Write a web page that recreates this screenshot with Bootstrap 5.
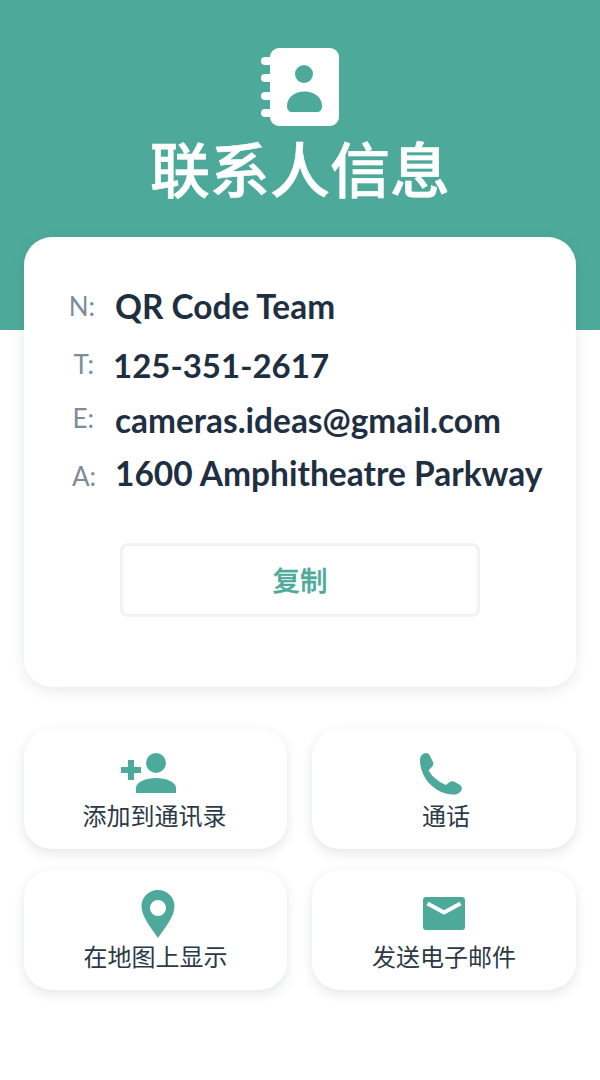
<!DOCTYPE html>
<html lang="zh-CN">

<head>
    <meta charset="UTF-8">
    <meta name="viewport" content="width=device-width, initial-scale=1.0">
    <title>联系人信息</title>
    <link href="https://cdn.jsdelivr.net/npm/bootstrap@5.3.2/dist/css/bootstrap.min.css" rel="stylesheet">

    <style>
        body {
            font-family: Lato, "Noto Sans CJK SC", sans-serif;
            background-color: #fff;
            color: #1f2f42;
        }

        .page-head {
            height: 330px;
            padding-top: 48px;
            background-color: #4daa9a;
        }

        .head-icon {
            display: block;
            width: 78px;
            height: 78px;
            margin: 0 auto;
        }

        .head-title {
            margin: 14px 0 0;
            font-size: 60px;
            line-height: 60px;
            font-weight: 500;
            -webkit-text-stroke: .6px #fff;
            color: #fff;
        }

        .info-card {
            margin: -93px 24px 0;
            padding: 49px 0 70px;
            border: 0;
            border-radius: 28px;
            box-shadow: 0 4px 14px rgba(30, 50, 70, .1);
        }

        .info-row {
            height: 40px;
            line-height: 40px;
        }

        .row-t { margin-top: 19px; }
        .row-e { margin-top: 15px; }
        .row-a { margin-top: 13px; }

        .info-label {
            width: 71px;
            flex: none;
            text-align: right;
            font-size: 26px;
            color: #7d8c9a;
        }

        .info-value {
            margin-left: 20px;
            font-size: 33.4px;
            font-weight: 700;
            white-space: nowrap;
        }

        .row-t .info-label { margin-top: -1px; width: 70px; }
        .row-t .info-value { margin-left: 19px; font-size: 33px; }
        .row-e .info-label { margin-top: -2px; width: 70px; }
        .row-e .info-value { margin-left: 21px; }
        .row-a .info-label { margin-top: 3px; width: 72px; }
        .row-a .info-value { margin-left: 19px; font-size: 33.5px; }

        .copy-btn {
            display: block;
            width: 360px;
            height: 74px;
            margin: 50px auto 0;
            padding-top: 8px;
            border: 3px solid #f1f2f2;
            border-radius: 8px;
            background-color: #fff;
            font-size: 27.500px;
            font-weight: 500;
            -webkit-text-stroke: .3px #4daa9a;
            color: #4daa9a;
        }

        .action-grid {
            display: grid;
            grid-template-columns: 263px 264px;
            column-gap: 25px;
            row-gap: 21px;
            margin: 42px 24px 0;
            padding-bottom: 40px;
        }

        .action-tile {
            height: 120px;
            padding-top: 20px;
            border: 0;
            border-radius: 28px;
            box-shadow: 0 4px 12px rgba(30, 50, 70, .12);
            font-size: 24px;
            line-height: 32px;
            color: #2c3a47;
        }

        .tile-icon {
            display: block;
            height: 48px;
            margin-bottom: 3px;
        }

        .icon-add { margin-left: -14px; }
        .icon-call { margin-left: -6px; }
        .icon-pin { margin-left: 4px; }
        .text-add { margin-left: -2px; }
        .text-call { margin-left: 4px; }
    </style>
</head>

<body>
    <!-- Cabecalho -->
    <header class="page-head text-center">
        <svg class="head-icon" viewBox="261 48 78 78">
            <rect x="270" y="48" width="69" height="78" rx="9" fill="#fff" />
            <rect x="261" y="57" width="14" height="8" rx="4" fill="#fff" />
            <rect x="261" y="74" width="14" height="8" rx="4" fill="#fff" />
            <rect x="261" y="92" width="14" height="8" rx="4" fill="#fff" />
            <rect x="261" y="109" width="14" height="8" rx="4" fill="#fff" />
            <circle cx="304" cy="74" r="9" fill="#4daa9a" />
            <path d="M287 106C287 97 295 91.500 304.500 91.500S322 97 322 106C322 110 320 112 317 112H292C289 112 287 110 287 106Z" fill="#4daa9a" />
        </svg>
        <h1 class="head-title">联系人信息</h1>
    </header>

    <main>
        <div class="card info-card">
            <div class="info-row d-flex row-n">
                <span class="info-label">N:</span>
                <span class="info-value">QR Code Team</span>
            </div>
            <div class="info-row d-flex row-t">
                <span class="info-label">T:</span>
                <span class="info-value">125-351-2617</span>
            </div>
            <div class="info-row d-flex row-e">
                <span class="info-label">E:</span>
                <span class="info-value">cameras.ideas@gmail.com</span>
            </div>
            <div class="info-row d-flex row-a">
                <span class="info-label">A:</span>
                <span class="info-value">1600 Amphitheatre Parkway</span>
            </div>
            <button type="button" class="btn copy-btn">复制</button>
        </div>

        <!-- Acoes -->
        <div class="action-grid">
            <div class="card action-tile align-items-center">
                <svg class="tile-icon icon-add" width="58" viewBox="120 748 58 48">
                    <circle cx="156" cy="762" r="10" fill="#4daa9a" />
                    <path d="M136 792V787C136 781 146 777 156 777S176 781 176 787V792Z" fill="#4daa9a" />
                    <path d="M121 769H141M131 759V779" stroke="#4daa9a" stroke-width="6" fill="none" />
                </svg>
                <span class="text-add">添加到通讯录</span>
            </div>
            <div class="card action-tile align-items-center">
                <svg class="tile-icon icon-call" width="44" viewBox="-1 -4 44 48">
                    <path d="M0 7C0 3 3 0 6 0C8 0 9 1 10 3L13 9C14 11 13 13 11 15L8.500 17C12 24 19 29 26 32L29 29.500C31 28 33 28 35 29L40 32C42 33.500 42.500 36 41 38C39 41 36 41.500 33 41.500C15 41 0 25 0 7Z" fill="#4daa9a" />
                </svg>
                <span class="text-call">通话</span>
            </div>
            <div class="card action-tile align-items-center">
                <svg class="tile-icon icon-pin" width="34" viewBox="140 889 34 48">
                    <path fill-rule="evenodd" d="M157 889C166 889 173.500 896 173.500 905C173.500 916 163 928 157 937C151 928 140.500 916 140.500 905C140.500 896 148 889 157 889ZM157 899A8 8 0 1 0 157 915A8 8 0 1 0 157 899Z" fill="#4daa9a" />
                </svg>
                <span>在地图上显示</span>
            </div>
            <div class="card action-tile align-items-center">
                <svg class="tile-icon" width="42" viewBox="0 -7 42 48">
                    <rect width="42" height="33" rx="3" fill="#4daa9a" />
                    <path d="M4.500 6.500L21 15.500L37.500 6.500" stroke="#fff" stroke-width="4" fill="none" />
                </svg>
                <span>发送电子邮件</span>
            </div>
        </div>
    </main>

    <script src="https://cdn.jsdelivr.net/npm/bootstrap@5.3.2/dist/js/bootstrap.bundle.min.js"></script>
</body>

</html>
